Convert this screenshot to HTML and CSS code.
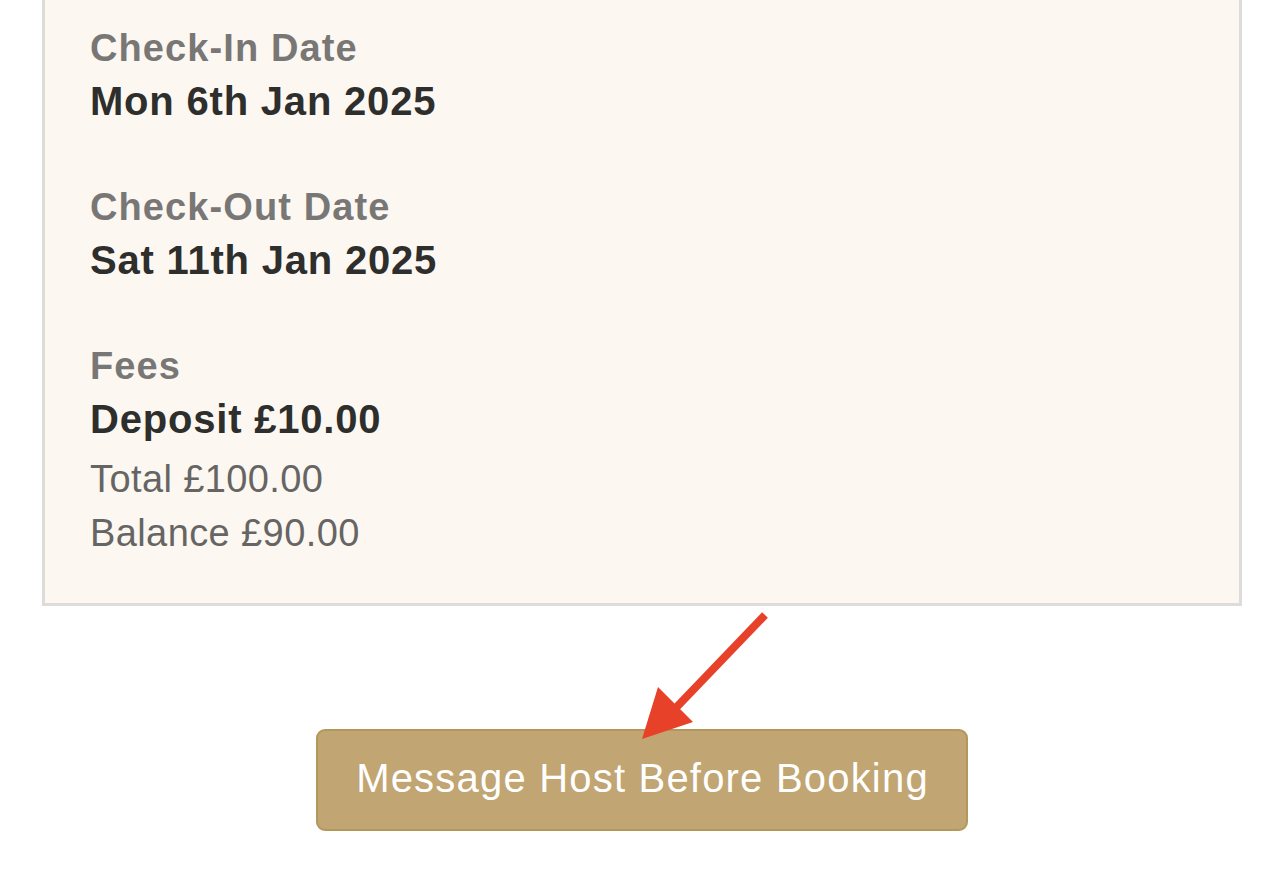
FILE: index.html
```html
<!DOCTYPE html>
<html lang="en">
<head>
<meta charset="utf-8">
<title>Booking summary</title>
<link rel="stylesheet" href="styles.css">
</head>
<body>
  <section class="card">
    <div class="group">
      <div class="label">Check-In Date</div>
      <div class="value">Mon 6th Jan 2025</div>
    </div>
    <div class="group">
      <div class="label">Check-Out Date</div>
      <div class="value">Sat 11th Jan 2025</div>
    </div>
    <div class="group">
      <div class="label">Fees</div>
      <div class="value">Deposit £10.00</div>
      <div class="sub first">Total £100.00</div>
      <div class="sub">Balance £90.00</div>
    </div>
  </section>
  <div class="cta">
    <button class="btn" type="button">Message Host Before Booking</button>
    <svg class="arrow" width="1284" height="200" viewBox="0 606 1284 200" aria-hidden="true">
      <line x1="765" y1="615" x2="670" y2="714" stroke="#e8412a" stroke-width="8"/>
      <polygon points="642,739 658,687 693,722" fill="#e8412a"/>
    </svg>
  </div>
</body>
</html>
```
FILE: styles.css
```css
html, body {
  margin: 0;
  padding: 0;
  background: #ffffff;
}
body {
  font-family: "Liberation Sans", Arial, Helvetica, sans-serif;
  width: 1284px;
  height: 874px;
  overflow: hidden;
}
.card {
  margin: -3px 42px 0 42px;
  background: #fcf8f1;
  border: 3px solid #dddcda;
  padding: 26px 40px 43px 45px;
}
.group + .group {
  margin-top: 60px;
}
.label {
  font-size: 38px;
  font-weight: 700;
  line-height: 44px;
  color: #787776;
  letter-spacing: 1.1px;
}
.value {
  margin-top: 7px;
  font-size: 40px;
  font-weight: 700;
  line-height: 48px;
  color: #2e2e2d;
  letter-spacing: 0.8px;
}
.sub {
  font-size: 38px;
  line-height: 54px;
  color: #666564;
  letter-spacing: 0.4px;
}
.sub.first {
  margin-top: 9px;
}
.cta {
  position: relative;
  display: flex;
  justify-content: center;
  padding-top: 123px;
}
.btn {
  width: 652px;
  height: 102px;
  box-sizing: border-box;
  background: #c1a572;
  border: 2px solid #b3975d;
  border-radius: 9px;
  color: #ffffff;
  font-family: "Liberation Sans", Arial, Helvetica, sans-serif;
  font-size: 40px;
  letter-spacing: 1.2px;
  padding: 0 0 4px 1px;
  display: flex;
  align-items: center;
  justify-content: center;
}
.arrow {
  position: absolute;
  top: 0;
  left: 0;
  pointer-events: none;
}
```
